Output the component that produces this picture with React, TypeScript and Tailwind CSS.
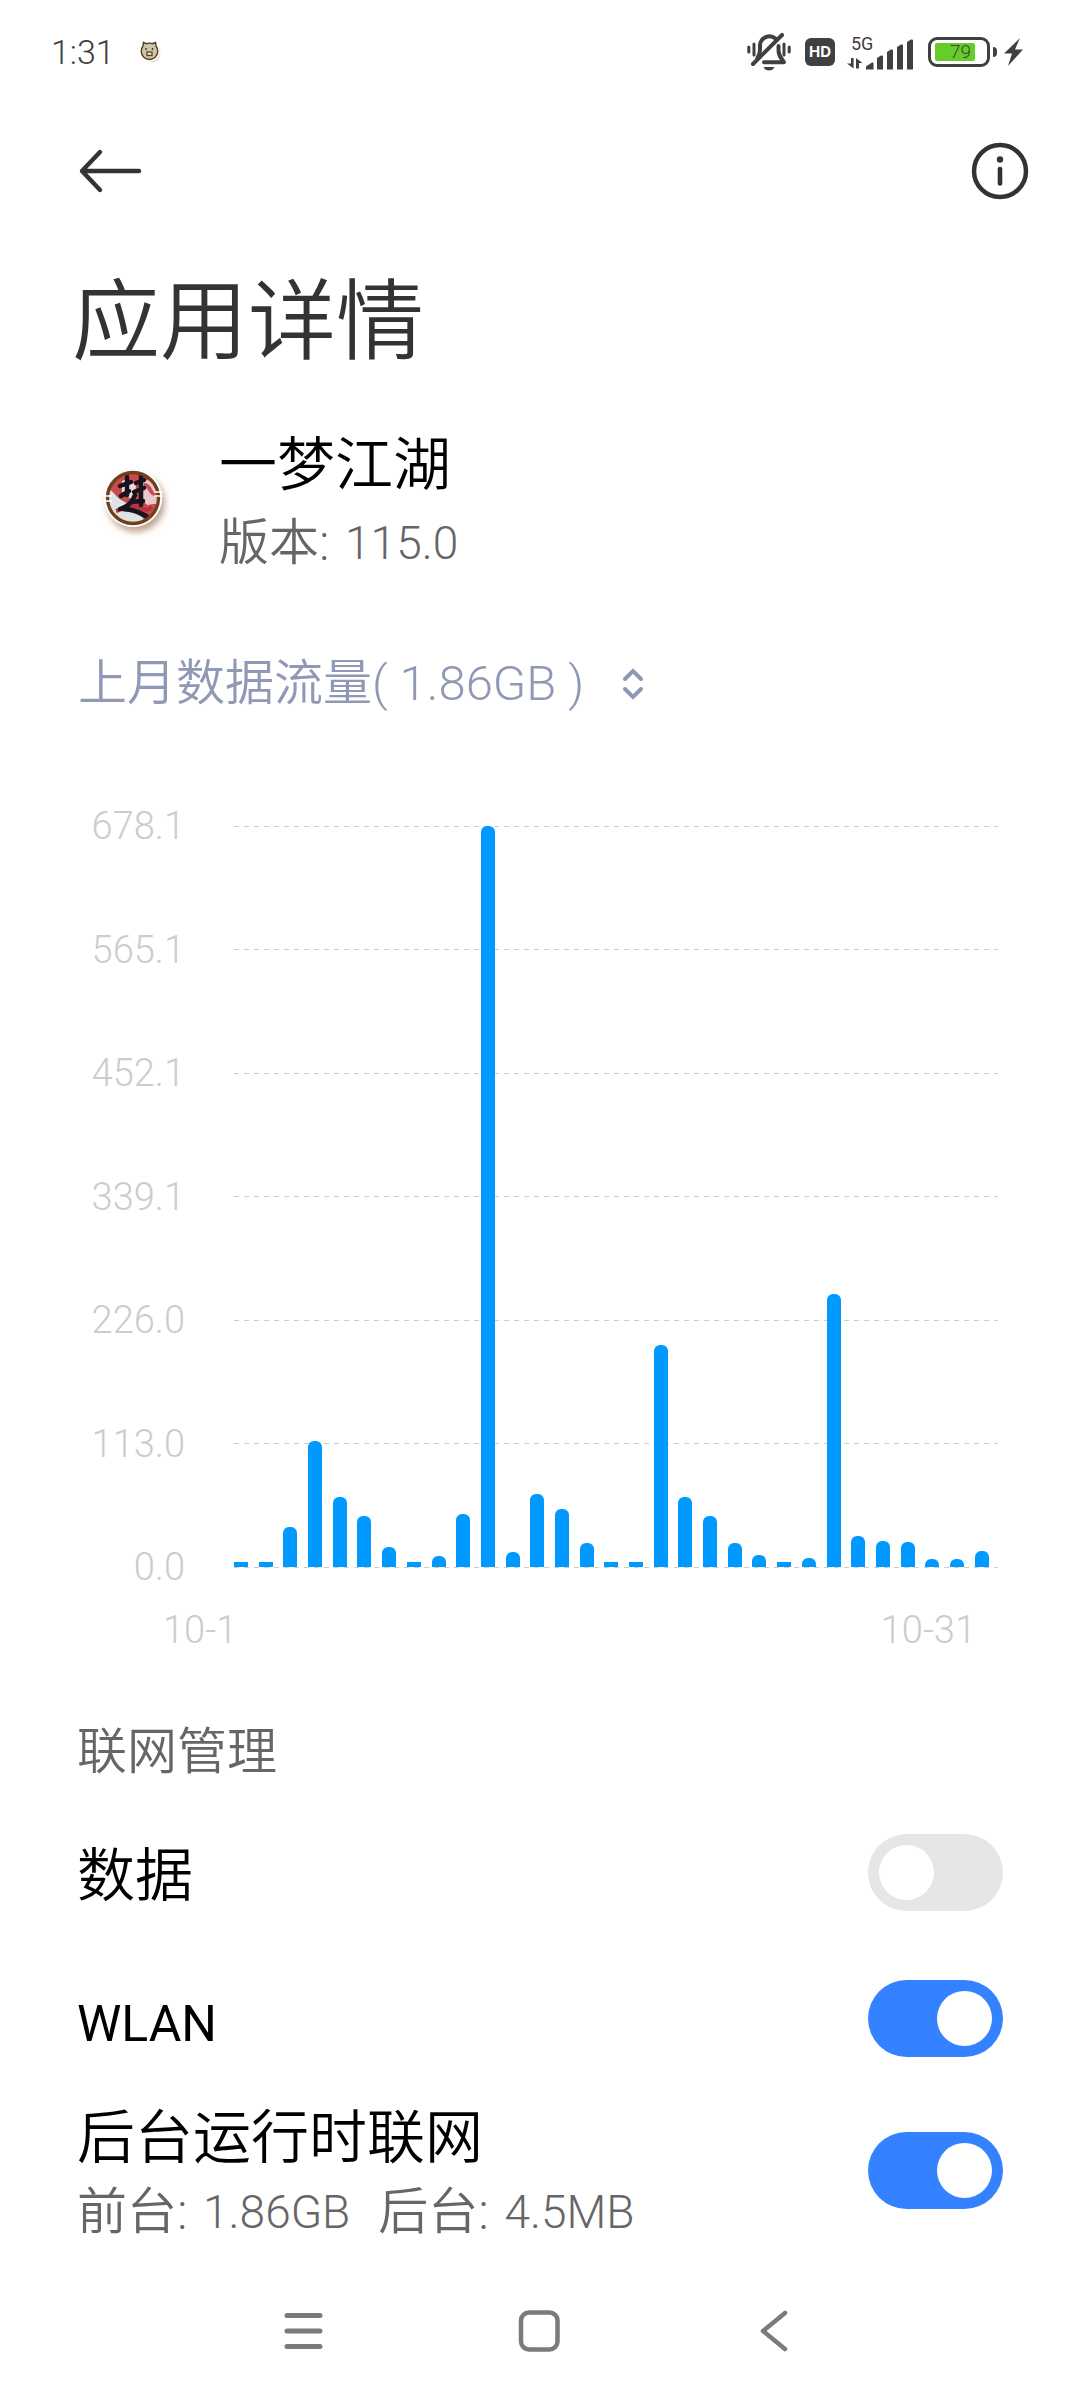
import { useState } from "react";

type NetworkRowProps = {
  id: string;
  title: React.ReactNode;
  checked: boolean;
  onToggle: () => void;
  children?: React.ReactNode;
};

type Usage = {
  day: number;
  megabytes: number;
};

const maxUsage = 678.1;

const gridLabels = ["678.1", "565.1", "452.1", "339.1", "226.0", "113.0", "0.0"];

const dailyUsage: Usage[] = [
  0, 0, 36.6, 115.3, 64.1, 46.7, 18.3, 0, 10.5, 48.5, 678.1, 13.7, 66.8, 53.1,
  22, 0, 0, 203.1, 64.1, 46.7, 22.4, 11.4, 0, 8.2, 249.8, 28.4, 23.8, 23.3, 7.4,
  7.4, 15.1,
].map((megabytes, index) => ({ day: index + 1, megabytes }));

function MutedBellIcon() {
  return (
    <svg width="44" height="38" viewBox="0 0 44 38" fill="none" aria-hidden="true">
      <g stroke="#404040" strokeWidth="4" strokeLinecap="round">
        <path d="M1.800 14v5M7 11v11M37 11v11M42.200 14v5" strokeWidth="3" />
        <path d="M28.500 5.500A9.500 9.500 0 0 0 13 12v5c0 3-1 5.500-2.600 8" />
        <path d="M31.500 13v4c0 5 2 7.500 5.500 12.200H17" strokeLinejoin="round" />
        <path d="M35 2 6 31" />
      </g>
      <path d="M16.500 34h11c-1 2.500-3 3.500-5.500 3.500s-4.500-1-5.500-3.500Z" fill="#404040" />
    </svg>
  );
}

function SignalIcon() {
  return (
    <svg width="68" height="36" viewBox="0 0 68 36" fill="#404040" aria-hidden="true">
      <text
        x="4"
        y="16"
        fontSize="18"
        fontWeight="400"
        fontFamily="Roboto, 'Liberation Sans', sans-serif"
      >
        5G
      </text>
      <path d="M4 24h2.600v10.500L0 29.500h4zM9 34.500V24l6.500 5h-3.500v5.500z" />
      <path d="M19 35.500v-3l6-4q1.500-.5 1.500 1v6zM30 35.500V24l4-2.500q2-.5 2 1v13zM40 35.500V18l4-2.500q2-.5 2 1v19zM50 35.500V13l4-2.500q2-.5 2 1v24zM60 35.500V8l4-2.500q2-.5 2 1v29z" />
    </svg>
  );
}

function BoltIcon() {
  return (
    <svg width="20" height="30" viewBox="0 0 20 30" fill="#404040" aria-hidden="true">
      <path d="M16 1 0 16.500h8L4 29 19 12.500h-8z" />
    </svg>
  );
}

function BearIcon() {
  return (
    <svg width="22" height="24" viewBox="0 0 22 24" aria-hidden="true">
      <circle cx="12" cy="13" r="9.500" fill="#e3cfc6" />
      <circle cx="11" cy="12" r="10" fill="#fff" />
      <path
        d="M4 6 4.500 2.500l3 1.200a9 9 0 0 1 6 0l3-1.200.5 3.500a8.300 8.300 0 1 1-13 0Z"
        fill="#c5c8ab"
        stroke="#5c3618"
        strokeWidth="1.400"
      />
      <path d="M7 8v2M13.500 8v2" stroke="#5c3618" strokeWidth="1.400" />
      <rect x="8" y="12" width="5" height="3.500" fill="#f6dfd0" stroke="#6b3a18" strokeWidth="1.300" />
    </svg>
  );
}

function StatusBar() {
  return (
    <div className="flex h-[104px] items-center justify-between pr-14 pl-[51px] text-[#404040]">
      <div className="flex items-center gap-6">
        <span className="font-['Roboto'] text-[34px] leading-10">1:31</span>
        <BearIcon />
      </div>
      <div className="flex items-center">
        <MutedBellIcon />
        <span className="ml-[14px] flex h-7 w-[30px] items-center justify-center rounded-md bg-[#404040] font-['Inter'] text-[15px] font-bold text-white">
          HD
        </span>
        <span className="ml-3">
          <SignalIcon />
        </span>
        <span className="ml-[13px] flex h-[30px] w-[62px] items-center rounded-[9px] border-3 border-[#404040] px-1">
          <span className="flex h-[18px] w-10 items-center justify-end rounded-[2px] bg-[#66cc29] pr-1 font-['Roboto'] text-[19px] leading-6">
            79
          </span>
        </span>
        <span className="ml-[3px] h-[10px] w-1 rounded-r-sm bg-[#404040]" />
        <span className="ml-[7px]">
          <BoltIcon />
        </span>
      </div>
    </div>
  );
}

function Header() {
  return (
    <header>
      <div className="flex h-[134px] items-center justify-between pr-[51px] pl-[78px]">
        <button type="button" aria-label="返回">
          <svg width="64" height="46" viewBox="0 0 64 46" fill="none" stroke="#333" strokeWidth="4.400" strokeLinecap="round" strokeLinejoin="round">
            <path d="M22 4 4 23l18 19M4 23h57" />
          </svg>
        </button>
        <button type="button" aria-label="信息">
          <svg width="58" height="58" viewBox="0 0 58 58" fill="none" stroke="#333" strokeLinecap="round">
            <circle cx="29" cy="29" r="26" strokeWidth="4.500" />
            <path d="M29 27v14.500" strokeWidth="4.600" />
            <circle cx="29" cy="17.500" r="3.200" fill="#333" stroke="none" />
          </svg>
        </button>
      </div>
      <h1 className="px-[72px] pt-6 text-[88px] leading-[120px] text-[#333]">应用详情</h1>
    </header>
  );
}

function GameIcon() {
  return (
    <svg width="70" height="74" viewBox="0 0 70 74" aria-hidden="true">
      <defs>
        <clipPath id="game-disc">
          <circle cx="33" cy="31" r="26" />
        </clipPath>
        <filter id="game-shadow" x="-20%" y="-20%" width="150%" height="150%">
          <feDropShadow dx="3" dy="5" stdDeviation="3" floodColor="#8a5a38" floodOpacity="0.55" />
        </filter>
      </defs>
      <circle cx="33" cy="31" r="29" fill="#fff" filter="url(#game-shadow)" />
      <g clipPath="url(#game-disc)">
        <rect width="70" height="70" fill="#c9494f" />
        <path d="M5 20c8 2 10 10 18 14s8 6 12 8l14 16H14L4 44z" fill="#dfe3e6" />
        <path d="M22 14c6-3 10 0 14 5l-2 14-12-6z" fill="#e9dedd" />
        <path d="M42 12c-4 8 0 12-2 20l10 8 12-6V16z" fill="#e8c9cc" />
        <path d="M44 18c8 0 4 10 14 10M46 46c-4-6 8-8 12-6" stroke="#cf4a55" strokeWidth="4" fill="none" />
        <path d="M16 44c8-2 14-8 22-4s10 4 14 0" stroke="#b8323b" strokeWidth="4" fill="none" />
      </g>
      <g stroke="#18131c" strokeWidth="4.500" fill="none" strokeLinecap="round" strokeLinejoin="round">
        <path d="M20 19l11-4M27 10v18M21 29l8-5M36 16l8-3M41 8v30M34 25l10-4" />
        <path d="M35 28c-3 8-7 11-15 14M31 35l12-1" />
        <path d="M24 42c8 0 14 3 22 7" strokeWidth="5" />
      </g>
      <circle cx="33" cy="31" r="25.500" fill="none" stroke="#70401c" strokeWidth="3.400" />
      <path d="M3 29h9M3 34h9M54 25h9M54 29h9" stroke="#fff" strokeWidth="1.400" />
    </svg>
  );
}

function AppSummary() {
  return (
    <section className="mt-11 flex items-center px-[78px]">
      <div className="flex w-[141px] items-center pl-[22px]">
        <GameIcon />
      </div>
      <div>
        <h2 className="text-[58px] leading-[78px] text-black">一梦江湖</h2>
        <p className="flex gap-4 text-[50px] leading-[78px] text-[#666]">
          <span>版本:</span>
          <span className="font-['Roboto'] text-[46px]">115.0</span>
        </p>
      </div>
    </section>
  );
}

function PeriodSelect() {
  const [period, setPeriod] = useState("last");

  return (
    <div className="mt-[62px] flex h-20 items-center gap-9 px-[78px] text-[#9098b5]">
      <select
        aria-label="统计周期"
        value={period}
        onChange={(event) => setPeriod(event.target.value)}
        className="appearance-none bg-transparent font-['Roboto','Noto_Sans_CJK_SC',sans-serif] text-[49px] leading-[78px] outline-none"
      >
        <option value="last">上月数据流量( 1.86GB )</option>
      </select>
      <svg width="24" height="34" viewBox="0 0 24 34" fill="none" stroke="currentColor" strokeWidth="4" strokeLinecap="round" aria-hidden="true">
        <path d="m4 12 8-8 8 8M4 22l8 8 8-8" />
      </svg>
    </div>
  );
}

function UsageChart() {
  return (
    <section className="mt-[82px] mr-[82px] ml-[78px] font-['Roboto'] text-[38px] leading-10 text-[#ccc]">
      <div className="relative flex h-[781px] flex-col justify-between">
        {gridLabels.map((label) => (
          <div key={label} className="flex items-center gap-[49px]">
            <span className="w-[107px] text-right">{label}</span>
            <span className="h-px flex-1 bg-[repeating-linear-gradient(90deg,#ccc_0_5px,transparent_5px_10px)]" />
          </div>
        ))}
        <div className="absolute top-5 right-[9px] bottom-5 left-[156px] flex items-end justify-between">
          {dailyUsage.map((usage) => (
            <span
              key={usage.day}
              className={`min-h-[5px] w-[14px] bg-[#0099ff] ${
                usage.megabytes > 0 ? "rounded-t-[6px]" : ""
              }`}
              style={{ height: `${(usage.megabytes / maxUsage) * 100}%` }}
            />
          ))}
        </div>
      </div>
      <div className="mt-[13px] flex h-[60px] items-center justify-between pr-[22px] pl-[85px]">
        <span>10-1</span>
        <span>10-31</span>
      </div>
    </section>
  );
}

function NetworkRow({ id, title, checked, onToggle, children }: NetworkRowProps) {
  return (
    <div className="flex min-h-[146px] items-center justify-between py-px">
      <div className="pt-2">
        <label htmlFor={id} className="block text-[58px] leading-[76px] text-black">
          {title}
        </label>
        {children}
      </div>
      <input
        id={id}
        type="checkbox"
        role="switch"
        checked={checked}
        onChange={onToggle}
        className="h-[77px] w-[135px] shrink-0 appearance-none rounded-full bg-[#e6e6e6] p-[11px] before:block before:size-[55px] before:rounded-full before:bg-white checked:bg-[#3482ff] checked:before:ml-auto"
      />
    </div>
  );
}

function TrafficAmount({ label, amount }: { label: string; amount: string }) {
  return (
    <span className="flex gap-4">
      <span>{label}</span>
      <span className="font-['Roboto'] text-[46px]">{amount}</span>
    </span>
  );
}

function NetworkSettings() {
  const [settings, setSettings] = useState({
    data: false,
    wlan: true,
    background: true,
  });

  function toggle(key: keyof typeof settings) {
    setSettings((current) => ({ ...current, [key]: !current[key] }));
  }

  return (
    <section className="mt-[52px] px-[77px]">
      <h2 className="mb-[7px] text-[50px] leading-20 text-[#666]">联网管理</h2>
      <NetworkRow id="data" title="数据" checked={settings.data} onToggle={() => toggle("data")} />
      <NetworkRow
        id="wlan"
        title={<span className="font-['Roboto'] text-[50px] font-normal">WLAN</span>}
        checked={settings.wlan}
        onToggle={() => toggle("wlan")}
      />
      <NetworkRow
        id="background"
        title="后台运行时联网"
        checked={settings.background}
        onToggle={() => toggle("background")}
      >
        <p className="flex gap-7 text-[50px] leading-[72px] text-[#666]">
          <TrafficAmount label="前台:" amount="1.86GB" />
          <TrafficAmount label="后台:" amount="4.5MB" />
        </p>
      </NetworkRow>
    </section>
  );
}

function NavigationBar() {
  return (
    <nav className="mt-8 flex h-[100px] items-center justify-center gap-44">
      <button type="button" aria-label="最近任务" className="flex w-[60px] justify-center">
        <svg width="44" height="44" viewBox="0 0 44 44" stroke="#7b7b7b" strokeWidth="5" strokeLinecap="round">
          <path d="M5 6.500h33M5 22h33M5 37.500h33" />
        </svg>
      </button>
      <button type="button" aria-label="主屏幕" className="flex w-[60px] justify-center">
        <svg width="44" height="44" viewBox="0 0 44 44" fill="none" stroke="#7b7b7b" strokeWidth="4.500">
          <rect x="3" y="3.500" width="36.500" height="37" rx="8" />
        </svg>
      </button>
      <button type="button" aria-label="返回上一级" className="flex w-[60px] justify-center">
        <svg width="44" height="44" viewBox="0 0 44 44" fill="none" stroke="#7b7b7b" strokeWidth="4.500" strokeLinecap="round" strokeLinejoin="round">
          <path d="M31 4 9 22l22 18" />
        </svg>
      </button>
    </nav>
  );
}

export default function App() {
  return (
    <main className="min-h-screen bg-white font-['Roboto_Condensed','Noto_Sans_CJK_SC',sans-serif] font-[350]">
      <StatusBar />
      <Header />
      <AppSummary />
      <PeriodSelect />
      <UsageChart />
      <NetworkSettings />
      <NavigationBar />
    </main>
  );
}
